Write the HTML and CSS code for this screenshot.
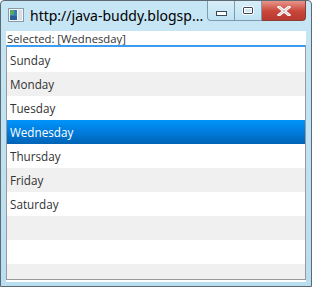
FILE: index.html
```html
<!DOCTYPE html>
<html lang="en">
<head>
<meta charset="utf-8">
<link rel="stylesheet" href="styles.css">
<title>ListView demo</title>
</head>
<body>
<div class="window">
  <div class="titlebar">
    <svg class="appicon" width="16" height="14" viewBox="0 0 16 14">
      <rect x="0.5" y="0.5" width="15" height="13" fill="#f4f6f8" stroke="#8a9aa8"/>
      <rect x="2" y="2" width="7" height="10" fill="#3a7ab8"/>
      <rect x="2" y="2" width="4" height="5" fill="#5aa860"/>
      <rect x="2" y="8" width="7" height="4" fill="#2a5f98"/>
      <rect x="10" y="2" width="4" height="10" fill="#d6dde4"/>
    </svg>
    <div class="title">http://java-buddy.blogsp...</div>
    <div class="controls">
      <div class="btn min"><span></span></div>
      <div class="btn max"><span></span></div>
      <div class="btn close">
        <svg width="14" height="10" viewBox="0 0 14 10">
          <path d="M2 1 L12 9 M12 1 L2 9" stroke="#fff" stroke-width="3" stroke-linecap="square"/>
          <path d="M2 1 L12 9 M12 1 L2 9" stroke="#5a2a26" stroke-width="0.6" fill="none" opacity="0.5"/>
        </svg>
      </div>
    </div>
  </div>
  <div class="client">
    <div class="label">Selected: [Wednesday]</div>
    <ul class="list">
      <li>Sunday</li>
      <li class="odd">Monday</li>
      <li>Tuesday</li>
      <li class="selected">Wednesday</li>
      <li>Thursday</li>
      <li class="odd">Friday</li>
      <li>Saturday</li>
      <li class="odd"></li>
      <li></li>
      <li class="odd"></li>
    </ul>
  </div>
</div>
</body>
</html>
```

FILE: styles.css
```css
body {
  margin: 0;
  padding: 0;
  font-family: "Open Sans", "Noto Sans", sans-serif;
}
.window {
  width: 312px;
  height: 287px;
  box-sizing: border-box;
  border: 1px solid #5c6a74;
  border-radius: 4px 4px 0 0;
  background: linear-gradient(#c7e6f5, #b9def0);
  display: flex;
  flex-direction: column;
  padding: 0 5px 4px 5px;
}
.titlebar {
  height: 30px;
  flex-shrink: 0;
  display: flex;
  align-items: flex-start;
}
.appicon {
  flex-shrink: 0;
  margin: 7px 0 0 2px;
}
.title {
  font-family: "Noto Sans", "Open Sans", sans-serif;
  font-size: 14px;
  line-height: 20px;
  color: #000;
  margin: 5px 0 0 6px;
  white-space: nowrap;
  min-width: 0;
  overflow: hidden;
}
.controls {
  display: flex;
  flex-shrink: 0;
  margin-left: auto;
  height: 20px;
}
.btn {
  height: 19px;
  border: 1px solid #7f9aae;
  border-top: 0;
  display: flex;
  align-items: center;
  justify-content: center;
  background: linear-gradient(#d8eef9, #bfe2f3);
}
.btn.min {
  width: 26px;
  border-radius: 0 0 0 4px;
}
.btn.max {
  width: 26px;
  border-left: 0;
}
.btn.close {
  width: 43px;
  border-left: 0;
  border-color: #8c3b33;
  border-radius: 0 0 4px 0;
  background: linear-gradient(#e8948a, #c8453a 55%, #b83a30);
}
.btn.min span {
  display: block;
  width: 9px;
  height: 3px;
  border: 1px solid #3a4a58;
  background: #fff;
  margin-top: 5px;
}
.btn.max span {
  display: block;
  width: 8px;
  height: 5px;
  border: 1px solid #3a4a58;
  border-radius: 1px;
  outline: 1px solid #fff;
  background: #d4e8f4;
  box-shadow: inset 0 0 0 1px #fff;
}
.client {
  flex: 1;
  min-height: 0;
  background: #fff;
  display: flex;
  flex-direction: column;
  padding-bottom: 2px;
}
.label {
  font-size: 11.3px;
  line-height: 16px;
  color: #333;
  padding-left: 1px;
  height: 14px;
  flex-shrink: 0;
}
.list {
  flex: 1;
  min-height: 0;
  list-style: none;
  margin: 0;
  padding: 1px 0 0 0;
  border: 1px solid #9a9a9a;
  border-top: 2px solid #3c9cef;
  overflow: hidden;
  background: #fff;
}
.list li {
  height: 24px;
  line-height: 24px;
  font-size: 11.7px;
  color: #333;
  padding-left: 3px;
}
.list li.odd {
  background: #f0f0f0;
}
.list li.selected {
  color: #fff;
  background: linear-gradient(#0094fb, #0077d6 60%, #0064b4);
}
```
